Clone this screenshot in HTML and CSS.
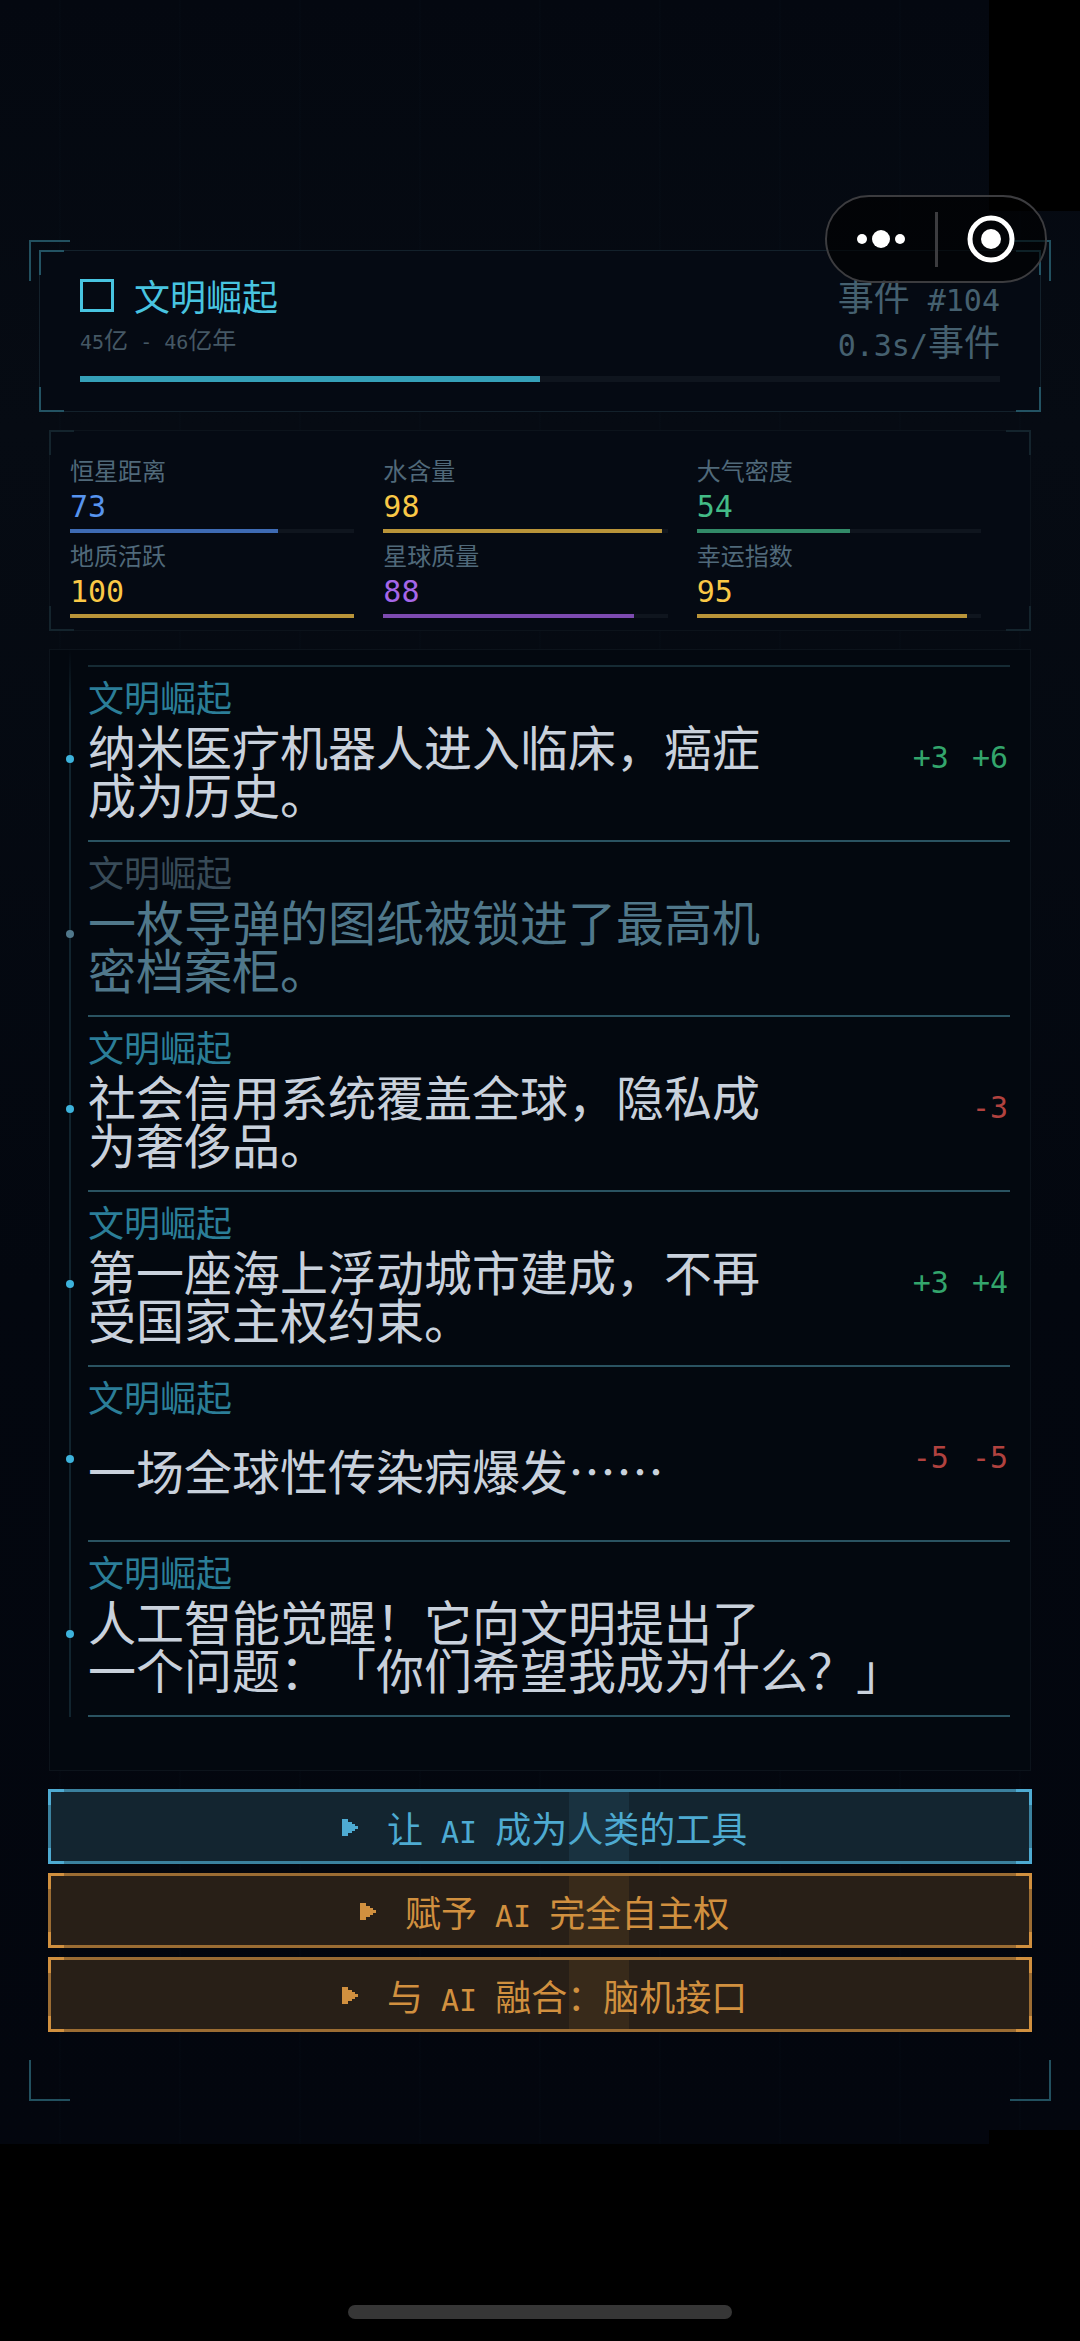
FILE: index.html
```html
<!DOCTYPE html>
<html lang="zh-CN">

<head>
  <meta charset="UTF-8">
  <meta name="viewport" content="width=device-width, initial-scale=1">
  <title>文明崛起</title>
  <link rel="stylesheet" href="styles.css">
</head>

<body>

  <main class="pantalla">
    <div class="marco">

      <header class="panel cabecera esquinas">
        <div class="cabecera-fila">
          <div>
            <h1 class="titulo"><span class="cuadro"></span>文明崛起</h1>
            <p class="periodo"><span class="lat-s">45</span>亿<span class="lat-s"> - 46</span>亿年</p>
          </div>
          <div class="contador">
            <p>事件<span class="lat"> #104</span></p>
            <p><span class="lat">0.3s/</span>事件</p>
          </div>
        </div>
        <div class="barra barra-total"><div class="relleno" style="width: 50%"></div></div>
      </header>

      <section class="panel stats esquinas">
        <div class="stat azul">
          <p class="stat-nombre">恒星距离</p>
          <p class="stat-valor lat">73</p>
          <div class="barra"><div class="relleno" style="width: 73%"></div></div>
        </div>
        <div class="stat oro">
          <p class="stat-nombre">水含量</p>
          <p class="stat-valor lat">98</p>
          <div class="barra"><div class="relleno" style="width: 98%"></div></div>
        </div>
        <div class="stat verde">
          <p class="stat-nombre">大气密度</p>
          <p class="stat-valor lat">54</p>
          <div class="barra"><div class="relleno" style="width: 54%"></div></div>
        </div>
        <div class="stat oro">
          <p class="stat-nombre">地质活跃</p>
          <p class="stat-valor lat">100</p>
          <div class="barra"><div class="relleno" style="width: 100%"></div></div>
        </div>
        <div class="stat morado">
          <p class="stat-nombre">星球质量</p>
          <p class="stat-valor lat">88</p>
          <div class="barra"><div class="relleno" style="width: 88%"></div></div>
        </div>
        <div class="stat oro">
          <p class="stat-nombre">幸运指数</p>
          <p class="stat-valor lat">95</p>
          <div class="barra"><div class="relleno" style="width: 95%"></div></div>
        </div>
      </section>

      <section class="panel historial">
        <ul class="eventos">
          <li class="evento">
            <div class="evento-info">
              <p class="etiqueta">文明崛起</p>
              <p class="texto">纳米医疗机器人进入临床，癌症<br>成为历史。</p>
            </div>
            <div class="cambios lat sube"><span>+3</span><span>+6</span></div>
          </li>
          <li class="evento apagado">
            <div class="evento-info">
              <p class="etiqueta">文明崛起</p>
              <p class="texto">一枚导弹的图纸被锁进了最高机<br>密档案柜。</p>
            </div>
          </li>
          <li class="evento">
            <div class="evento-info">
              <p class="etiqueta">文明崛起</p>
              <p class="texto">社会信用系统覆盖全球，隐私成<br>为奢侈品。</p>
            </div>
            <div class="cambios lat baja"><span>-3</span></div>
          </li>
          <li class="evento">
            <div class="evento-info">
              <p class="etiqueta">文明崛起</p>
              <p class="texto">第一座海上浮动城市建成，不再<br>受国家主权约束。</p>
            </div>
            <div class="cambios lat sube"><span>+3</span><span>+4</span></div>
          </li>
          <li class="evento">
            <div class="evento-info">
              <p class="etiqueta">文明崛起</p>
              <p class="texto">一场全球性传染病爆发……</p>
            </div>
            <div class="cambios lat baja"><span>-5</span><span>-5</span></div>
          </li>
          <li class="evento">
            <div class="evento-info">
              <p class="etiqueta">文明崛起</p>
              <p class="texto">人工智能觉醒！它向文明提出了<br>一个问题：「你们希望我成为什么？」</p>
            </div>
          </li>
        </ul>
      </section>

      <div class="opciones">
        <button type="button" class="opcion esquinas celeste">
          <svg class="flecha" viewBox="0 0 36 36" aria-hidden="true"><path d="M9 10h6v3h4v2h3v2h3v3h-3v2h-3v2h-4v3H9z"/></svg>
          <span><span class="lat"> </span>让<span class="lat"> AI </span>成为人类的工具</span>
        </button>
        <button type="button" class="opcion esquinas naranja">
          <svg class="flecha" viewBox="0 0 36 36" aria-hidden="true"><path d="M9 10h6v3h4v2h3v2h3v3h-3v2h-3v2h-4v3H9z"/></svg>
          <span><span class="lat"> </span>赋予<span class="lat"> AI </span>完全自主权</span>
        </button>
        <button type="button" class="opcion esquinas naranja">
          <svg class="flecha" viewBox="0 0 36 36" aria-hidden="true"><path d="M9 10h6v3h4v2h3v2h3v3h-3v2h-3v2h-4v3H9z"/></svg>
          <span><span class="lat"> </span>与<span class="lat"> AI </span>融合：脑机接口</span>
        </button>
      </div>

    </div>

    <!-- botones del sistema -->
    <div class="capsula">
      <button type="button" aria-label="更多">
        <svg width="48" height="24" viewBox="0 0 48 24"><circle cx="5" cy="12" r="5"/><circle cx="24" cy="12" r="9"/><circle cx="43" cy="12" r="5"/></svg>
      </button>
      <button type="button" aria-label="关闭">
        <svg width="50" height="50" viewBox="0 0 50 50"><circle class="aro" cx="25" cy="25" r="21"/><circle cx="25" cy="25" r="10"/></svg>
      </button>
    </div>
  </main>

  <footer class="inicio"><div class="inicio-barra"></div></footer>

</body>

</html>
```
FILE: styles.css
```css
* {
  box-sizing: border-box;
}

body {
  margin: 0;
  background: #000;
  color: #c9d1dc;
  font-family: "Noto Sans CJK SC", sans-serif;
  font-size: 36px;
  text-spacing-trim: space-all;
}

h1, p, ul {
  margin: 0;
  padding: 0;
  font-weight: normal;
}

/* letras y cifras a medio ancho */
.lat {
  font-family: "DejaVu Sans Mono", monospace;
  font-size: 30px;
  line-height: 1;
  white-space: pre;
}

.lat-s {
  font-family: "DejaVu Sans Mono", monospace;
  font-size: 20px;
  line-height: 1;
  white-space: pre;
}

.pantalla {
  position: relative;
  padding: 240px 29px 43px;
  background:
    linear-gradient(#000, #000) top right / 91px 211px no-repeat,
    linear-gradient(#000, #000) bottom right / 91px 14px no-repeat,
    repeating-linear-gradient(90deg, transparent 0 59px, rgba(60, 140, 170, 0.01) 59px 61px, transparent 61px 120px),
    linear-gradient(#040810, #060b13 20%, #03070f 60%, #03060e);
}

/* marco exterior con cuatro esquinas */
.marco {
  --c: #22505f;
  padding: 10px 10px 69px;
  background:
    linear-gradient(var(--c), var(--c)) 0 0 / 41px 2px,
    linear-gradient(var(--c), var(--c)) 0 0 / 2px 41px,
    linear-gradient(var(--c), var(--c)) 100% 0 / 41px 2px,
    linear-gradient(var(--c), var(--c)) 100% 0 / 2px 41px,
    linear-gradient(var(--c), var(--c)) 0 100% / 41px 2px,
    linear-gradient(var(--c), var(--c)) 0 100% / 2px 41px,
    linear-gradient(var(--c), var(--c)) 100% 100% / 41px 2px,
    linear-gradient(var(--c), var(--c)) 100% 100% / 2px 41px;
  background-repeat: no-repeat;
}

.panel {
  margin: 0 10px 18px;
  border: 1px solid #0c131b;
  background-color: #050a13;
}

/* esquinas resaltadas encima del borde */
.esquinas {
  --b: 1px;
  --g: 2px;
  --l: 25px;
  position: relative;
}

.esquinas::before {
  content: "";
  position: absolute;
  inset: calc(-1 * var(--b));
  pointer-events: none;
  background-image:
    linear-gradient(var(--c), var(--c)), linear-gradient(var(--c), var(--c)),
    linear-gradient(var(--c), var(--c)), linear-gradient(var(--c), var(--c)),
    linear-gradient(var(--c), var(--c)), linear-gradient(var(--c), var(--c)),
    linear-gradient(var(--c), var(--c)), linear-gradient(var(--c), var(--c));
  background-position: 0 0, 0 0, 100% 0, 100% 0, 0 100%, 0 100%, 100% 100%, 100% 100%;
  background-size:
    var(--l) var(--g), var(--g) var(--l), var(--l) var(--g), var(--g) var(--l),
    var(--l) var(--g), var(--g) var(--l), var(--l) var(--g), var(--g) var(--l);
  background-repeat: no-repeat;
}

.cabecera {
  --c: #235363;
  margin: 0 0 18px;
  padding: 22px 40px 29px;
  border-color: #13212b;
}

.cabecera-fila {
  display: flex;
  justify-content: space-between;
  color: #45606f;
}

.titulo {
  display: flex;
  align-items: center;
  gap: 20px;
  font-size: 36px;
  line-height: 44px;
  color: #48c4e0;
}

.cuadro {
  width: 34px;
  height: 33px;
  border: 3px solid #48c4e0;
}

.periodo {
  font-size: 24px;
  line-height: 44px;
  color: #455865;
}

.contador {
  text-align: right;
  line-height: 45px;
}

.barra {
  height: 4px;
  background: #0f151e;
}

.relleno {
  height: 100%;
  background: var(--barra);
}

.barra-total {
  --barra: #35a0b8;
  height: 6px;
  margin-top: 13px;
}

.stats {
  --c: #14242d;
  display: grid;
  grid-template-columns: repeat(3, 1fr);
  row-gap: 8px;
  padding: 25px 20px 12px;
}

.stat {
  padding-right: 29px;
}

.stat-nombre {
  font-size: 24px;
  line-height: 28px;
  color: #50697a;
}

.stat-valor {
  line-height: 45px;
  color: var(--num);
}

.azul { --num: #5794ee; --barra: #3e6bb4; }
.oro { --num: #fac846; --barra: #b99439; }
.verde { --num: #43bb87; --barra: #328a68; }
.morado { --num: #a566e8; --barra: #7d4bb0; }

.historial {
  padding: 0 20px 53px 19px;
  background-color: #03080f;
}

.eventos {
  list-style: none;
  padding: 15px 0 0 19px;
  background: linear-gradient(transparent, #11242e 60px) 0 0 / 2px 100% no-repeat;
}

.evento {
  position: relative;
  display: flex;
  align-items: center;
  justify-content: space-between;
  height: 175px;
  padding-top: 9px;
  border-bottom: 2px solid #2a5361;
}

.evento:first-child {
  height: 177px;
  border-top: 2px solid #162b34;
}

/* punto sobre la linea de tiempo */
.evento::before {
  content: "";
  position: absolute;
  left: -22px;
  top: 88px;
  width: 8px;
  height: 8px;
  border-radius: 50%;
  background: #3db3dc;
}

.apagado::before {
  background: #50788b;
}

.evento-info {
  display: grid;
  grid-template-rows: 40px 106px;
  align-items: center;
  align-self: flex-start;
}

.etiqueta {
  line-height: 40px;
  color: #2b7e98;
}

.texto {
  font-size: 48px;
  line-height: 48px;
  white-space: nowrap;
}

.apagado .etiqueta {
  color: #384b58;
}

.apagado .texto {
  color: #50788b;
}

.cambios {
  display: flex;
  gap: 23px;
  padding-right: 2px;
}

.sube { color: #33a56c; }
.baja { color: #b1423f; }

.opciones {
  display: grid;
  gap: 9px;
  margin: 0 9px;
}

.opcion {
  --b: 3px;
  --g: 3px;
  --l: 16px;
  display: flex;
  align-items: center;
  justify-content: center;
  height: 75px;
  padding: 0;
  border: 3px solid var(--borde);
  background-color: var(--fondo);
  color: var(--c);
  font-family: inherit;
  font-size: 36px;
  line-height: 44px;
}

/* reflejo que cruza el boton */
.opcion::after {
  content: "";
  position: absolute;
  top: 0;
  bottom: 0;
  left: 53%;
  width: 60px;
  background: var(--c);
  opacity: 0.1;
}

.celeste { --c: #4eabd2; --borde: #3b819e; --fondo: #132530; }
.naranja { --c: #d1903f; --borde: #9b6c33; --fondo: #281f17; }

.flecha {
  width: 36px;
  height: 36px;
  fill: currentColor;
}

.capsula {
  position: absolute;
  top: 195px;
  right: 33px;
  display: flex;
  align-items: center;
  width: 222px;
  height: 88px;
  border: 2px solid #3c3c3f;
  border-radius: 44px;
  background: rgba(0, 0, 0, 0.6);
}

.capsula button {
  display: flex;
  align-items: center;
  justify-content: center;
  flex: 1;
  height: 55px;
  padding: 0;
  border: 0;
  background: none;
}

.capsula button + button {
  border-left: 3px solid #3c3c3f;
}

.capsula svg {
  fill: #fff;
}

.capsula .aro {
  fill: none;
  stroke: #fff;
  stroke-width: 5;
}

.inicio {
  display: flex;
  justify-content: center;
  padding: 161px 0 22px;
}

.inicio-barra {
  width: 384px;
  height: 14px;
  border-radius: 7px;
  background: #363636;
}
```
